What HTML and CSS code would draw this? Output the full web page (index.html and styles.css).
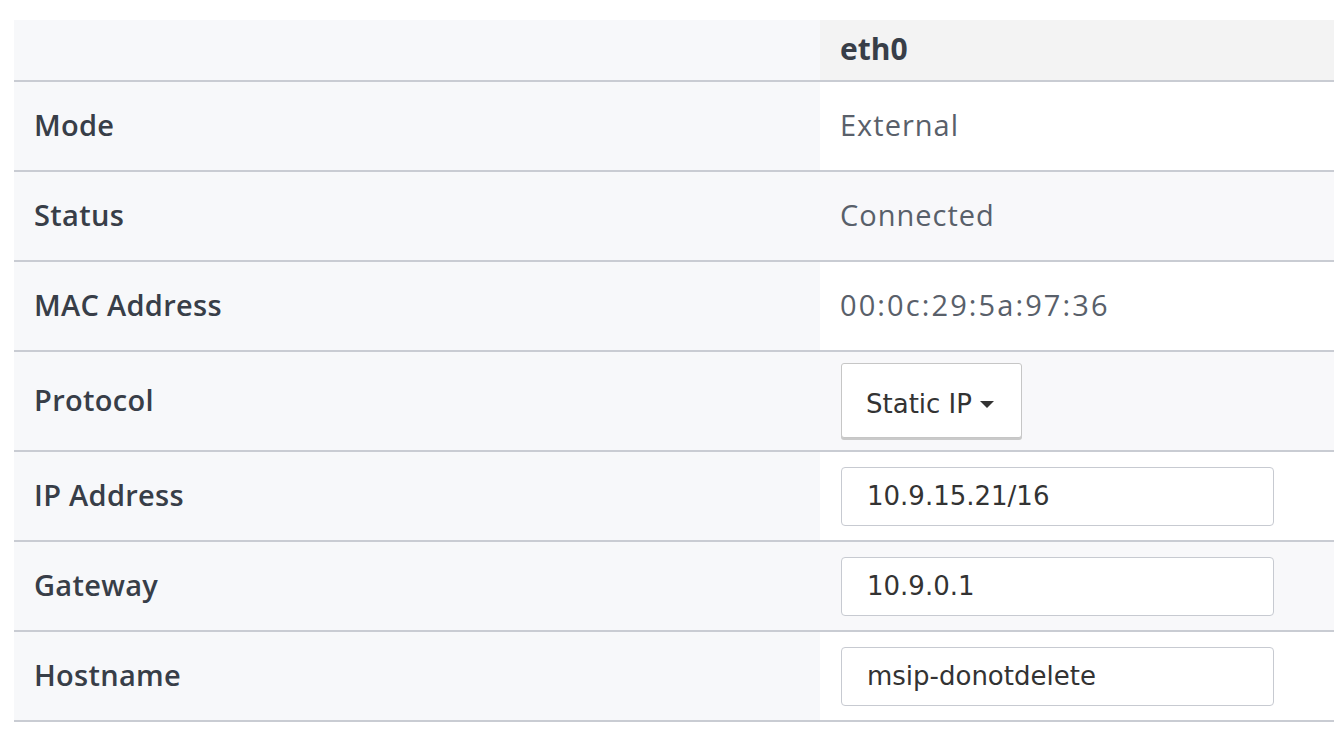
FILE: index.html
```html
<!DOCTYPE html>
<html>
<head>
<meta charset="utf-8">
<link rel="stylesheet" href="styles.css">
</head>
<body>
<div class="panel">
  <div class="row head">
    <div class="label"></div>
    <div class="value">eth0</div>
  </div>
  <div class="row">
    <div class="label">Mode</div>
    <div class="value">External</div>
  </div>
  <div class="row alt">
    <div class="label">Status</div>
    <div class="value">Connected</div>
  </div>
  <div class="row">
    <div class="label">MAC Address</div>
    <div class="value num">00:0c:29:5a:97:36</div>
  </div>
  <div class="row alt tall">
    <div class="label">Protocol</div>
    <div class="value control">
      <div class="dropdown">Static IP <span class="caret"></span></div>
    </div>
  </div>
  <div class="row">
    <div class="label">IP Address</div>
    <div class="value control"><div class="field">10.9.15.21/16</div></div>
  </div>
  <div class="row alt">
    <div class="label">Gateway</div>
    <div class="value control"><div class="field">10.9.0.1</div></div>
  </div>
  <div class="row">
    <div class="label">Hostname</div>
    <div class="value control"><div class="field">msip-donotdelete</div></div>
  </div>
</div>
</body>
</html>
```

FILE: styles.css
```css
html, body {
  margin: 0;
  padding: 0;
  background: #ffffff;
}

.panel {
  padding: 20px 0 0 14px;
  font-family: "Open Sans", "Noto Sans", sans-serif;
}

.row {
  display: grid;
  grid-template-columns: 806px 514px;
  height: 88px;
  border-bottom: 2px solid #c9ccd3;
}

.row.head {
  height: 60px;
}

.row.tall {
  height: 98px;
}

.label {
  background: #f7f8fa;
  display: flex;
  align-items: center;
  padding-left: 20px;
  padding-bottom: 3px;
  font-size: 29px;
  font-weight: 600;
  letter-spacing: 0.3px;
  color: #383e48;
}

.value {
  background: #ffffff;
  display: flex;
  align-items: center;
  padding-left: 20px;
  padding-bottom: 3px;
  font-size: 29px;
  font-weight: 400;
  letter-spacing: 1px;
  color: #59606a;
}

.value.num {
  letter-spacing: 2.1px;
}

.value.control {
  padding-bottom: 0;
}

.row.alt .value {
  background: #f8f8fa;
}

.row.head .value {
  background: #f3f3f3;
  font-size: 30px;
  font-weight: 700;
  color: #383e48;
  letter-spacing: 0;
}

.dropdown {
  box-sizing: border-box;
  width: 181px;
  height: 75px;
  margin-top: -2px;
  margin-left: 1px;
  padding-top: 8px;
  background: #ffffff;
  border: 1px solid #c6c6c6;
  border-radius: 3px;
  box-shadow: 0 2px 0 #c9c9c9;
  display: flex;
  align-items: center;
  padding-left: 24px;
  font-family: "DejaVu Sans", sans-serif;
  font-size: 26px;
  letter-spacing: 0;
  color: #333333;
}

.caret {
  display: inline-block;
  width: 0;
  height: 0;
  margin-left: 8px;
  border-left: 7px solid transparent;
  border-right: 7px solid transparent;
  border-top: 7px solid #333333;
}

.field {
  box-sizing: border-box;
  width: 433px;
  height: 59px;
  margin-left: 1px;
  background: #ffffff;
  border: 1px solid #c7cad1;
  border-radius: 4px;
  display: flex;
  align-items: center;
  padding-left: 25px;
  font-family: "DejaVu Sans", sans-serif;
  font-size: 26px;
  letter-spacing: 0;
  color: #333333;
}
```
